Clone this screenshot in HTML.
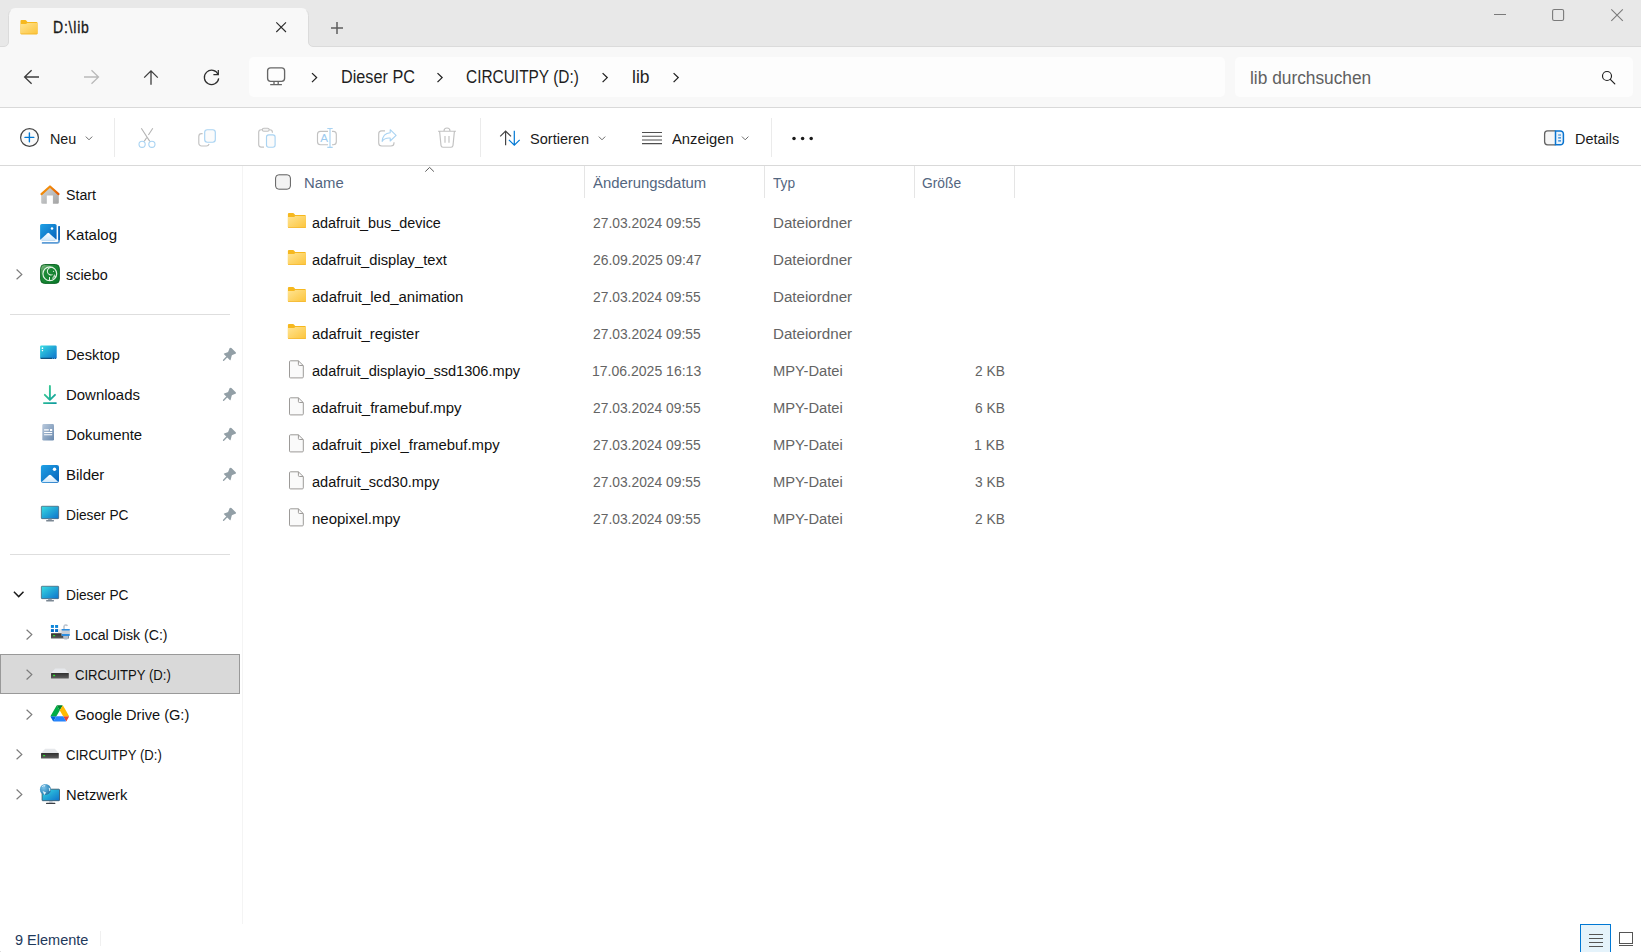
<!DOCTYPE html>
<html lang="de">
<head>
<meta charset="utf-8">
<title>D:\lib</title>
<style>
*{box-sizing:border-box;margin:0;padding:0}
html,body{width:1641px;height:952px;overflow:hidden;background:#fff}
body{position:relative;font-family:"Liberation Sans",sans-serif;font-size:14.5px;color:#1a1a1a;-webkit-font-smoothing:antialiased}
.abs,.t,svg.i{position:absolute}
.t{white-space:nowrap;line-height:20px;height:20px;transform-origin:0 0}
svg.i{overflow:visible}
#titlebar{position:absolute;left:0;top:0;width:1641px;height:46px;background:#e8e8e8}
#navbar{position:absolute;left:0;top:47px;width:1641px;height:60px;background:#f8f8f8}
#addr{position:absolute;left:249px;top:57px;width:976px;height:40px;background:#fdfdfd;border-radius:5px}
#search{position:absolute;left:1235px;top:57px;width:398px;height:40px;background:#fdfdfd;border-radius:5px}
.hline{position:absolute;left:0;width:1641px;height:1px;background:#d9d9d9}
#toolbar{position:absolute;left:0;top:108px;width:1641px;height:57px;background:#fff}
.vsep{position:absolute;width:1px;background:#ebebeb}
#sidebar{position:absolute;left:0;top:166px;width:242px;height:758px;background:#fff}
#divider{position:absolute;left:242px;top:166px;width:1px;height:758px;background:#f4f4f4}
.sline{position:absolute;left:10px;width:220px;height:1px;background:#dedede}
#sel{position:absolute;left:0;top:654px;width:240px;height:40px;background:#d9d9d9;border:1px solid #999}
#status{position:absolute;left:0;top:924px;width:1641px;height:28px;background:#fff}
.colsep{position:absolute;top:166px;width:1px;height:32px;background:#e5e5e5}
</style>
</head>
<body>
<div id="titlebar"></div>
<div id="navbar"></div>
<svg class="i" style="left:0;top:0" width="1641" height="48" viewBox="0 0 1641 48" fill="none">
<path d="M-1 46.5H4A4.5 4.5 0 0 0 8.5 42V15A7 7 0 0 1 15.5 8H301.5A7 7 0 0 1 308.5 15V42A4.5 4.5 0 0 0 313 46.5H1641V48H-1Z" fill="#f8f8f8"/>
<path d="M-1 46.5H4A4.5 4.5 0 0 0 8.5 42V15.5A7 7 0 0 1 10.5 10.5" stroke="#dbdbdb"/>
<path d="M306.5 10.5A7 7 0 0 1 308.5 15.5V42A4.5 4.5 0 0 0 313 46.5H1641" stroke="#dbdbdb"/>
</svg>
<div id="addr"></div>
<div id="search"></div>
<div class="hline" style="top:107px"></div>
<div id="toolbar"></div>
<div class="hline" style="top:165px"></div>
<div class="vsep" style="left:114px;top:118px;height:39px"></div>
<div class="vsep" style="left:480px;top:118px;height:39px"></div>
<div class="vsep" style="left:771px;top:118px;height:39px"></div>
<div id="sidebar"></div>
<div id="divider"></div>
<div class="sline" style="top:314px"></div>
<div class="sline" style="top:554px"></div>
<div id="sel"></div>
<div id="status"></div>
<div class="vsep" style="left:100px;top:931px;height:15px;background:#f0f0f0"></div>
<div class="colsep" style="left:584px"></div>
<div class="colsep" style="left:764px"></div>
<div class="colsep" style="left:914px"></div>
<div class="colsep" style="left:1014px"></div>
<header aria-label="Tabs">
<span class="t" id="tabt" style="left:52.96px;top:17.93px;font-size:15.8px;color:#1a1a1a;transform:scaleX(0.8864);-webkit-text-stroke:.3px #1a1a1a;letter-spacing:.9px">D:\lib</span>
</header>
<nav aria-label="Adressleiste">
<span class="t" id="bc1" style="left:340.94px;top:67.26px;font-size:18px;color:#1f1f1f;transform:scaleX(0.9016)">Dieser PC</span>
<span class="t" id="bc2" style="left:466.24px;top:67.26px;font-size:18px;color:#1f1f1f;transform:scaleX(0.8569)">CIRCUITPY (D:)</span>
<span class="t" id="bc3" style="left:631.76px;top:67.26px;font-size:18px;color:#1f1f1f;transform:scaleX(0.9713)">lib</span>
<span class="t" id="srch" style="left:1250.02px;top:67.76px;font-size:18px;color:#606060;transform:scaleX(0.9617)">lib durchsuchen</span>
<!-- top bar icons -->
<svg class="i" style="left:0;top:0" width="1641" height="110" viewBox="0 0 1641 110" fill="none">
<defs>
<linearGradient id="fg" x1="0" y1="0" x2="1" y2="1"><stop offset="0" stop-color="#ffe493"/><stop offset="1" stop-color="#fcc43a"/></linearGradient>
<symbol id="folder" viewBox="0 0 18 15" overflow="visible">
<path d="M0 1.1A1.1 1.1 0 0 1 1.1 0H5.2a1.2 1.2 0 0 1 .9.4L7.3 2H16.9A1.1 1.1 0 0 1 18 3.1V13.9A1.1 1.1 0 0 1 16.9 15H1.1A1.1 1.1 0 0 1 0 13.9Z" fill="#f6b81f"/>
<path d="M0 4.1H5.6a1.6 1.6 0 0 0 1-.4L7.3 3.1H18V13.9A1.1 1.1 0 0 1 16.9 15H1.1A1.1 1.1 0 0 1 0 13.9Z" fill="url(#fg)"/>
<path d="M0.3 14.5H17.7" stroke="#f2b42c" stroke-width=".8" opacity=".8"/>
</symbol>
</defs>
<!-- tab folder -->
<use href="#folder" x="20" y="20" width="18" height="14.2"/>
<!-- tab close -->
<path d="M276.3 22.3L286 32M286 22.3L276.3 32" stroke="#2b2b2b" stroke-width="1.1"/>
<!-- new tab plus -->
<path d="M331 28H343M337 22V34" stroke="#5e5e5e" stroke-width="1.5"/>
<!-- window controls -->
<path d="M1494 14.5H1506" stroke="#7a7a7a" stroke-width="1"/>
<rect x="1552.6" y="9.5" width="11" height="11" rx="1.6" stroke="#7a7a7a" stroke-width="1.1"/>
<path d="M1611.3 9.3L1622.8 20.8M1622.8 9.3L1611.3 20.8" stroke="#7a7a7a" stroke-width="1.1"/>
<!-- back -->
<path d="M39 77H24.6M31.6 70.2L24.6 77L31.6 83.8" stroke="#3d3d3d" stroke-width="1.3" stroke-linejoin="miter"/>
<!-- forward (disabled) -->
<path d="M84 77H98.5M91.5 70.2L98.5 77L91.5 83.8" stroke="#b9b9b9" stroke-width="1.3"/>
<!-- up -->
<path d="M151 84.8V70.9M144.2 77.6L151 70.8L157.8 77.6" stroke="#3d3d3d" stroke-width="1.3"/>
<!-- refresh -->
<path d="M218.2 74.6A7.2 7.2 0 1 0 218.7 78.4" stroke="#2e2e2e" stroke-width="1.25"/>
<path d="M218.3 69.9V74.7H213.4" stroke="#2e2e2e" stroke-width="1.25"/>
<!-- pc outline icon -->
<rect x="267.6" y="67.8" width="17" height="13.5" rx="3" stroke="#666" stroke-width="1.35"/>
<path d="M274 81.5V84.4M278.2 81.5V84.4M270.2 84.6H281.9" stroke="#666" stroke-width="1.3"/>
<!-- breadcrumb chevrons -->
<g stroke="#222" stroke-width="1.3">
<path d="M312 73.1L316.6 77.6L312 82.1"/>
<path d="M437.5 73.1L442.1 77.6L437.5 82.1"/>
<path d="M602.6 73.1L607.2 77.6L602.6 82.1"/>
<path d="M673.6 73.1L678.2 77.6L673.6 82.1"/>
</g>
<!-- search -->
<circle cx="1607" cy="76" r="4.5" stroke="#1f1f1f" stroke-width="1.15"/>
<path d="M1610.3 79.3L1614.8 83.8" stroke="#1f1f1f" stroke-width="1.2" stroke-linecap="round"/>
</svg>
</nav>
<section aria-label="Befehlsleiste">
<span class="t" id="neu" style="left:50.24px;top:128.70px;font-size:15.3px;color:#1a1a1a;transform:scaleX(0.9374)">Neu</span>
<span class="t" id="sort" style="left:530.24px;top:128.70px;font-size:15.3px;color:#1a1a1a;transform:scaleX(0.9507)">Sortieren</span>
<span class="t" id="anz" style="left:671.98px;top:128.70px;font-size:15.3px;color:#1a1a1a;transform:scaleX(0.9656)">Anzeigen</span>
<span class="t" id="det" style="left:1575.02px;top:128.70px;font-size:15.3px;color:#1a1a1a;transform:scaleX(0.9450)">Details</span>
<!-- toolbar icons -->
<svg class="i" style="left:0;top:108px" width="1641" height="57" viewBox="0 108 1641 57" fill="none">
<!-- new -->
<circle cx="29.5" cy="137.5" r="8.9" fill="#fafafa" stroke="#444" stroke-width="1.2"/>
<path d="M25 137.4H33.8M29.4 133V141.8" stroke="#0078d4" stroke-width="1.4" stroke-linecap="round"/>
<path d="M85.8 136.6L89 139.8L92.2 136.6" stroke="#6b6b6b" stroke-width="1"/>
<!-- cut -->
<g stroke-width="1.1">
<path d="M141.3 128.3L149.8 141.4M152.8 128.3L148.4 135M146.6 137.8L144.2 141.4" stroke="#b4b4b4"/>
<circle cx="142.1" cy="144.3" r="3.1" stroke="#a9d3f2"/>
<circle cx="151.9" cy="144.3" r="3.1" stroke="#a9d3f2"/>
</g>
<!-- copy -->
<path d="M202.6 133.6H201.6A2.8 2.8 0 0 0 198.8 136.4V143.2A2.8 2.8 0 0 0 201.6 146H206.4A2.8 2.8 0 0 0 209.1 144" stroke="#c2c2c2" stroke-width="1.15"/>
<rect x="204.7" y="129.7" width="10.6" height="12.5" rx="2.6" fill="#fbfbfb" stroke="#a9d3f2" stroke-width="1.15"/>
<!-- paste -->
<path d="M272.4 132.8V132.2A2.5 2.5 0 0 0 269.9 129.7H261.2A2.5 2.5 0 0 0 258.7 132.2V144.6A2.5 2.5 0 0 0 261.2 147.1H264" stroke="#c2c2c2" stroke-width="1.15"/>
<rect x="262.3" y="128.2" width="6.9" height="3.1" rx="1.55" fill="#f4f4f4" stroke="#c2c2c2" stroke-width="1.1"/>
<rect x="266.5" y="134.8" width="8.6" height="12.4" rx="2.2" fill="#fbfbfb" stroke="#a9d3f2" stroke-width="1.15"/>
<!-- rename -->
<path d="M328 131.3H320.5A3 3 0 0 0 317.5 134.3V141.7A3 3 0 0 0 320.5 144.7H328M332 131.3H333.3A3 3 0 0 1 336.3 134.3V141.7A3 3 0 0 1 333.3 144.7H332" stroke="#c2c2c2" stroke-width="1.15"/>
<path d="M330 128.5V147.4M327.3 128.5H332.7M327.3 147.4H332.7" stroke="#a9d3f2" stroke-width="1.15"/>
<text x="320.15" y="141.6" font-family="Liberation Sans, sans-serif" font-size="11.7" fill="#9ccbf0">A</text>
<!-- share -->
<path d="M385 130.9H381.7A3 3 0 0 0 378.7 133.9V143A3 3 0 0 0 381.7 146H391A3 3 0 0 0 394 143V142.2" stroke="#c2c2c2" stroke-width="1.15"/>
<path d="M390.2 129.7L396.1 135.3L390.2 141V138.1C386.4 137.8 383.7 139 382.1 141.4C382.5 136.6 385.3 133.1 390.2 132.7Z" stroke="#a9d3f2" stroke-width="1.1" stroke-linejoin="round"/>
<!-- delete -->
<path d="M438 131.2H456M439.6 131.4L441 145.4A2 2 0 0 0 443 147.2H451A2 2 0 0 0 453 145.4L454.4 131.4M444 131A3 3 0 0 1 450 131M445 136V142.8M449 136V142.8" stroke="#c2c2c2" stroke-width="1.15"/>
<!-- sort -->
<path d="M505.6 145.2V131M500.2 136.4L505.6 131L511 136.4" stroke="#444" stroke-width="1.2"/>
<path d="M514.3 130.8V145.2M508.9 139.8L514.3 145.2L519.7 139.8" stroke="#0078d4" stroke-width="1.2"/>
<path d="M598.8 136.6L602 139.8L605.2 136.6" stroke="#6b6b6b" stroke-width="1"/>
<!-- view -->
<path d="M642 132.5H662M642 136.2H662M642 139.9H662M642 143.6H662" stroke="#4f4f4f" stroke-width="1.05"/>
<path d="M742 136.6L745.2 139.8L748.4 136.6" stroke="#6b6b6b" stroke-width="1"/>
<!-- more -->
<circle cx="794" cy="138.4" r="1.75" fill="#1a1a1a"/><circle cx="802.6" cy="138.4" r="1.75" fill="#1a1a1a"/><circle cx="811.2" cy="138.4" r="1.75" fill="#1a1a1a"/>
<!-- details pane -->
<path d="M1555.5 130.9H1547.6A3 3 0 0 0 1544.6 133.9V141.8A3 3 0 0 0 1547.6 144.8H1555.5" fill="#f6f6f6" stroke="#616161" stroke-width="1.3"/>
<path d="M1555.5 130.9H1560.4A3 3 0 0 1 1563.4 133.9V141.8A3 3 0 0 1 1560.4 144.8H1555.5Z" fill="#eaf3fb" stroke="#0a74cf" stroke-width="1.5"/>
<path d="M1558.2 135H1561M1558.2 137.9H1561M1558.2 140.8H1561" stroke="#1a7fd6" stroke-width="1.2"/>
</svg>
</section>
<aside aria-label="Navigationsbereich">
<span class="t" id="s1" style="left:65.50px;top:184.70px;font-size:15.3px;color:#111;transform:scaleX(0.9279)">Start</span>
<span class="t" id="s2" style="left:65.50px;top:224.70px;font-size:15.3px;color:#111;transform:scaleX(0.9846)">Katalog</span>
<span class="t" id="s3" style="left:65.50px;top:264.70px;font-size:15.3px;color:#111;transform:scaleX(0.9423)">sciebo</span>
<span class="t" id="s4" style="left:65.50px;top:344.70px;font-size:15.3px;color:#111;transform:scaleX(0.9601)">Desktop</span>
<span class="t" id="s5" style="left:65.50px;top:384.70px;font-size:15.3px;color:#111;transform:scaleX(0.9768)">Downloads</span>
<span class="t" id="s6" style="left:65.50px;top:424.70px;font-size:15.3px;color:#111;transform:scaleX(0.9733)">Dokumente</span>
<span class="t" id="s7" style="left:65.50px;top:464.70px;font-size:15.3px;color:#111;transform:scaleX(0.9800)">Bilder</span>
<span class="t" id="s8" style="left:65.50px;top:504.70px;font-size:15.3px;color:#111;transform:scaleX(0.8962)">Dieser PC</span>
<span class="t" id="s9" style="left:65.50px;top:584.70px;font-size:15.3px;color:#111;transform:scaleX(0.8962)">Dieser PC</span>
<span class="t" id="s10" style="left:75.24px;top:624.70px;font-size:15.3px;color:#111;transform:scaleX(0.9228)">Local Disk (C:)</span>
<span class="t" id="s11" style="left:75.24px;top:664.70px;font-size:15.3px;color:#111;transform:scaleX(0.8563)">CIRCUITPY (D:)</span>
<span class="t" id="s12" style="left:75.24px;top:704.70px;font-size:15.3px;color:#111;transform:scaleX(0.9531)">Google Drive (G:)</span>
<span class="t" id="s13" style="left:65.50px;top:744.70px;font-size:15.3px;color:#111;transform:scaleX(0.8563)">CIRCUITPY (D:)</span>
<span class="t" id="s14" style="left:65.50px;top:784.70px;font-size:15.3px;color:#111;transform:scaleX(0.9624)">Netzwerk</span>
<!-- sidebar icons -->
<svg class="i" style="left:0;top:166px" width="242" height="758" viewBox="0 166 242 758" fill="none">
<defs>
<linearGradient id="gHome" x1="0" y1="0" x2="1" y2="1"><stop offset="0" stop-color="#d6dadc"/><stop offset="1" stop-color="#a3a3a3"/></linearGradient>
<linearGradient id="gRoof" x1="0" y1="0" x2="1" y2="0"><stop offset="0" stop-color="#f08a0a"/><stop offset=".5" stop-color="#f28c0c"/><stop offset="1" stop-color="#e25a00"/></linearGradient>
<linearGradient id="gPic" x1="0" y1="0" x2="1" y2="1"><stop offset="0" stop-color="#20a2e6"/><stop offset="1" stop-color="#0560b9"/></linearGradient>
<linearGradient id="gMnt" x1="0" y1="0" x2="0" y2="1"><stop offset="0" stop-color="#ffffff"/><stop offset="1" stop-color="#cfe8fb"/></linearGradient>
<linearGradient id="gScr" x1="0" y1="0" x2="1" y2="1"><stop offset="0" stop-color="#3adde3"/><stop offset=".5" stop-color="#22a6d6"/><stop offset="1" stop-color="#0f72cc"/></linearGradient>
<linearGradient id="gDoc" x1="0" y1="0" x2="1" y2="1"><stop offset="0" stop-color="#b9c9dc"/><stop offset="1" stop-color="#6888ad"/></linearGradient>
<linearGradient id="gDl" x1="0" y1="0" x2="1" y2="1"><stop offset="0" stop-color="#41d590"/><stop offset="1" stop-color="#0d9a9f"/></linearGradient>
<linearGradient id="gDrv" x1="0" y1="0" x2="0" y2="1"><stop offset="0" stop-color="#2f2f2f"/><stop offset="1" stop-color="#5e5e5e"/></linearGradient>
<linearGradient id="gSci" x1="0" y1="0" x2="1" y2="1"><stop offset="0" stop-color="#9cc797"/><stop offset=".32" stop-color="#1d8a37"/><stop offset="1" stop-color="#0a7a2a"/></linearGradient>
<radialGradient id="gGlobe" cx=".35" cy=".35" r=".75"><stop offset="0" stop-color="#7cc4ea"/><stop offset=".6" stop-color="#3f93c4"/><stop offset="1" stop-color="#246f9c"/></radialGradient>
<symbol id="pin" viewBox="0 0 14 14" overflow="visible">
<path d="M7.3 .5a1 1 0 0 1 1.4 0L13 4.6a1 1 0 0 1-.3 1.6L9.6 7.4a1 1 0 0 0-.6.7L7.9 12.3a.5.5 0 0 1-.85.2L1.3 6.6a.5.5 0 0 1 .2-.8L4.9 4.7a1 1 0 0 0 .6-.6L6.6 1.4a1 1 0 0 1 .7-.9Z" fill="#929fa6"/>
<path d="M4 9.5L.9 12.6" stroke="#929fa6" stroke-width="1.4" stroke-linecap="round"/>
</symbol>
<symbol id="drive" viewBox="0 0 18 10" overflow="visible">
<path d="M4.2 0H13.8L17.8 4.4H0.2Z" fill="#e6e8eb"/>
<rect x="0" y="4.3" width="17.8" height="5.6" rx=".5" fill="url(#gDrv)"/>
<rect x="2" y="6.2" width="2.2" height="1.4" rx=".6" fill="#2fe52f"/>
</symbol>
<symbol id="monitor" viewBox="0 0 18 16" overflow="visible">
<rect x=".35" y=".35" width="17.3" height="12.4" rx=".6" fill="url(#gScr)" stroke="#40586b" stroke-width=".7"/>
<rect x="7.1" y="12.9" width="3.7" height="1.3" fill="#93a0ab"/>
<rect x="5.1" y="14.1" width="7.9" height="1.4" rx=".4" fill="#7b8793"/>
</symbol>
</defs>
<!-- Start / home -->
<path d="M41.2 193.6L50 186.2L58.8 193.6V202.4A1.3 1.3 0 0 1 57.5 203.7H52.9V195.5H46.8V203.7H42.5A1.3 1.3 0 0 1 41.2 202.4Z" fill="url(#gHome)"/>
<path d="M41.5 194.1L50 186.5L58.5 194.1" stroke="url(#gRoof)" stroke-width="2.2" stroke-linecap="round" stroke-linejoin="round"/>
<!-- Katalog / gallery -->
<path d="M42.6 242.9H57A2.2 2.2 0 0 0 59.1 240.7V226.8" stroke="#5c9cd6" stroke-width="1.7" stroke-linecap="round"/>
<path d="M59.1 226.8V239.5" stroke="#0a66bb" stroke-width="1.7" stroke-linecap="round"/>
<rect x="40.1" y="223.9" width="16.5" height="16.3" rx="1.7" fill="url(#gPic)"/>
<path d="M40.6 239.6L47.5 233.2a1.2 1.2 0 0 1 1.6 0L56.2 239.6A1.2 1.2 0 0 1 55.4 240.2H41.4A1.2 1.2 0 0 1 40.6 239.6Z" fill="url(#gMnt)"/>
<circle cx="52" cy="228.4" r="1.25" fill="#fff"/>
<!-- sciebo -->
<rect x="40.6" y="264.5" width="18.8" height="18.9" rx="4" fill="url(#gSci)" stroke="#07601f" stroke-width=".9"/>
<circle cx="49.8" cy="273.7" r="6.9" stroke="#e6f2e6" stroke-width="1.15"/>
<path d="M51.6 267.6A3.7 3.7 0 1 0 52.6 274.6" stroke="#e6f2e6" stroke-width="1.05"/>
<path d="M49.5 277V280.4M52.6 277.6L53.4 279.6M54.6 274.6L53.6 277.4L56 276" stroke="#e6f2e6" stroke-width="1"/>
<circle cx="53.5" cy="271.3" r=".6" fill="#d6ead6"/>
<path d="M16.6 269.5L21.8 274.4L16.6 279.3" stroke="#7c7c7c" stroke-width="1.2"/>
<!-- Desktop -->
<rect x="40.1" y="345.6" width="16.6" height="13.2" rx="1.2" fill="url(#gScr)"/>
<path d="M40.6 358.3H52.2" stroke="#053a63" stroke-width="1"/>
<rect x="53" y="357.9" width="1" height=".9" fill="#0a4f8a"/><rect x="55" y="357.9" width="1" height=".9" fill="#0a4f8a"/>
<rect x="41.7" y="347.2" width="1.5" height="1.7" rx=".5" fill="#fff"/><rect x="41.7" y="350" width="1.5" height="1.2" rx=".4" fill="#fff"/>
<!-- Downloads -->
<path d="M49.9 386V399.6M44.8 394.8L49.9 399.9L55 394.8M43.9 403.1H55.9" stroke="url(#gDl)" stroke-width="1.9" stroke-linecap="round" stroke-linejoin="round"/>
<!-- Dokumente -->
<rect x="42.3" y="424.1" width="11.7" height="16.5" rx="1.3" fill="url(#gDoc)"/>
<path d="M44.1 429.8H48.8M44.1 432.5H52.2M44.1 434.7H52.2" stroke="#fff" stroke-width="1.15"/>
<rect x="50" y="429" width="2.2" height="2" rx=".3" fill="#fff"/>
<!-- Bilder -->
<rect x="40.9" y="465" width="18.1" height="17.9" rx="2.1" fill="url(#gPic)"/>
<path d="M41.9 481.7L48.9 475.3a1.6 1.6 0 0 1 2.2 0L58 481.7A1.5 1.5 0 0 1 57 482.2H42.9A1.5 1.5 0 0 1 41.9 481.7Z" fill="url(#gMnt)"/>
<circle cx="54.5" cy="469.3" r="1.7" fill="#fff"/>
<!-- Dieser PC (pinned) -->
<use href="#monitor" x="41" y="505.9" width="18" height="16"/>
<!-- pins -->
<use href="#pin" x="222.7" y="347.6" width="14" height="14"/>
<use href="#pin" x="222.7" y="387.6" width="14" height="14"/>
<use href="#pin" x="222.7" y="427.6" width="14" height="14"/>
<use href="#pin" x="222.7" y="467.6" width="14" height="14"/>
<use href="#pin" x="222.7" y="507.6" width="14" height="14"/>
<!-- Dieser PC (tree) -->
<path d="M13.9 591.8L18.7 596.6L23.5 591.8" stroke="#1a1a1a" stroke-width="1.45"/>
<use href="#monitor" x="41" y="585.9" width="18" height="16"/>
<!-- Local Disk -->
<path d="M26.6 629.7L31.8 634.6L26.6 639.5" stroke="#7c7c7c" stroke-width="1.2"/>
<rect x="50.9" y="625" width="3" height="2.9" fill="#0c86da"/><rect x="55.1" y="625" width="3" height="2.9" fill="#0c86da"/>
<rect x="50.9" y="629.1" width="3" height="2.9" fill="#006ac6"/><rect x="55.1" y="629.1" width="3" height="2.9" fill="#006ac6"/>
<rect x="58.1" y="629.3" width="4" height="4" fill="#e4e4e4"/>
<rect x="51" y="633.2" width="17.8" height="5.4" rx=".4" fill="url(#gDrv)"/>
<rect x="53" y="634.9" width="2.2" height="1.4" rx=".6" fill="#2fe52f"/>
<path d="M64 629V626.4A1.9 1.9 0 0 1 67.4 625.9" stroke="#bcc5d0" stroke-width="1.6"/>
<path d="M63.2 635.5H68.4V637A2.3 2.3 0 0 1 63.2 637Z" fill="#b4bcc8"/>
<rect x="61.5" y="628.9" width="8.4" height="7" rx=".9" fill="#c9ced6"/>
<rect x="61.5" y="628.9" width="8.4" height="1.7" rx=".8" fill="#2b8de0"/>
<rect x="61.5" y="634.1" width="8.4" height="1.8" rx=".8" fill="#2b8de0"/>
<!-- CIRCUITPY selected -->
<path d="M26.6 669.7L31.8 674.6L26.6 679.5" stroke="#7c7c7c" stroke-width="1.2"/>
<use href="#drive" x="51" y="668.6" width="18" height="10"/>
<!-- Google Drive -->
<path d="M26.6 709.7L31.8 714.6L26.6 719.5" stroke="#7c7c7c" stroke-width="1.2"/>
<g transform="translate(50.6 705.2) scale(.2105)">
<path d="m6.6 66.85 3.85 6.65c.8 1.4 1.95 2.5 3.3 3.3l13.75-23.8h-27.5c0 1.55.4 3.1 1.2 4.5z" fill="#0066da"/>
<path d="m43.65 25-13.75-23.8c-1.35.8-2.5 1.9-3.3 3.3l-25.4 44a9.06 9.06 0 0 0 -1.2 4.5h27.5z" fill="#00ac47"/>
<path d="m73.55 76.8c1.35-.8 2.5-1.9 3.3-3.3l1.6-2.75 7.65-13.25c.8-1.4 1.2-2.95 1.2-4.5h-27.502l5.852 11.5z" fill="#ea4335"/>
<path d="m43.65 25 13.75-23.8c-1.35-.8-2.9-1.2-4.5-1.2h-18.5c-1.6 0-3.15.45-4.5 1.2z" fill="#00832d"/>
<path d="m59.8 53h-32.3l-13.75 23.8c1.35.8 2.9 1.2 4.5 1.2h50.8c1.6 0 3.15-.45 4.5-1.2z" fill="#2684fc"/>
<path d="m73.4 26.5-12.7-22c-.8-1.4-1.95-2.5-3.3-3.3l-13.75 23.8 16.15 28h27.45c0-1.55-.4-3.1-1.2-4.5z" fill="#ffba00"/>
</g>
<!-- CIRCUITPY second -->
<path d="M16.6 749.5L21.8 754.4L16.6 759.3" stroke="#7c7c7c" stroke-width="1.2"/>
<use href="#drive" x="41" y="748.7" width="18" height="10"/>
<!-- Netzwerk -->
<path d="M16.6 789.5L21.8 794.4L16.6 799.3" stroke="#7c7c7c" stroke-width="1.2"/>
<rect x="42.1" y="789.2" width="17.4" height="11.5" rx=".6" fill="url(#gScr)" stroke="#2f4f63" stroke-width=".8"/>
<rect x="49" y="801.1" width="3.6" height="1.5" fill="#b9c2cc"/>
<path d="M46.6 803.4H54.8" stroke="#3a3f45" stroke-width="1.2" stroke-linecap="round"/>
<circle cx="45.4" cy="789.4" r="5.5" fill="url(#gGlobe)"/>
<path d="M42.3 786.6l1-.9 1.2.4M44 786l1.200000-.8" stroke="#d8eef8" stroke-width=".9" stroke-linecap="round"/>
<path d="M42.6 791l3.600000 1.600000-1.900000 2.300000z" fill="#dff1f8"/>
<path d="M48.6 787.6l1.500000 .6.300000 2.200000-1.100000 .8z" fill="#cfe9f4"/>
</svg>
</aside>
<main aria-label="Dateiliste">
<span class="t" id="h1" style="left:303.98px;top:172.70px;font-size:15.3px;color:#53667f;transform:scaleX(0.9729)">Name</span>
<span class="t" id="h2" style="left:592.50px;top:172.70px;font-size:15.3px;color:#53667f;transform:scaleX(0.9712)">Änderungsdatum</span>
<span class="t" id="h3" style="left:773.02px;top:172.70px;font-size:15.3px;color:#53667f;transform:scaleX(0.8952)">Typ</span>
<span class="t" id="h4" style="left:921.74px;top:172.70px;font-size:15.3px;color:#53667f;transform:scaleX(0.9039)">Größe</span>
<span class="t" id="n0" style="left:312.24px;top:212.70px;font-size:15.3px;color:#111;transform:scaleX(0.9413)">adafruit_bus_device</span>
<span class="t" id="d0" style="left:592.50px;top:212.70px;font-size:15.3px;color:#646464;transform:scaleX(0.9038)">27.03.2024 09:55</span>
<span class="t" id="t0" style="left:773.02px;top:212.70px;font-size:15.3px;color:#646464;transform:scaleX(0.9900)">Dateiordner</span>
<span class="t" id="n1" style="left:312.24px;top:249.70px;font-size:15.3px;color:#111;transform:scaleX(0.9610)">adafruit_display_text</span>
<span class="t" id="d1" style="left:592.50px;top:249.70px;font-size:15.3px;color:#646464;transform:scaleX(0.9105)">26.09.2025 09:47</span>
<span class="t" id="t1" style="left:773.02px;top:249.70px;font-size:15.3px;color:#646464;transform:scaleX(0.9900)">Dateiordner</span>
<span class="t" id="n2" style="left:312.24px;top:286.70px;font-size:15.3px;color:#111;transform:scaleX(0.9784)">adafruit_led_animation</span>
<span class="t" id="d2" style="left:592.50px;top:286.70px;font-size:15.3px;color:#646464;transform:scaleX(0.9038)">27.03.2024 09:55</span>
<span class="t" id="t2" style="left:773.02px;top:286.70px;font-size:15.3px;color:#646464;transform:scaleX(0.9900)">Dateiordner</span>
<span class="t" id="n3" style="left:312.24px;top:323.70px;font-size:15.3px;color:#111;transform:scaleX(0.9710)">adafruit_register</span>
<span class="t" id="d3" style="left:592.50px;top:323.70px;font-size:15.3px;color:#646464;transform:scaleX(0.9038)">27.03.2024 09:55</span>
<span class="t" id="t3" style="left:773.02px;top:323.70px;font-size:15.3px;color:#646464;transform:scaleX(0.9900)">Dateiordner</span>
<span class="t" id="n4" style="left:312.24px;top:360.70px;font-size:15.3px;color:#111;transform:scaleX(0.9518)">adafruit_displayio_ssd1306.mpy</span>
<span class="t" id="d4" style="left:591.70px;top:360.70px;font-size:15.3px;color:#646464;transform:scaleX(0.9171)">17.06.2025 16:13</span>
<span class="t" id="t4" style="left:773.02px;top:360.70px;font-size:15.3px;color:#646464;transform:scaleX(0.9626)">MPY-Datei</span>
<span class="t" id="z4" style="left:975.26px;top:360.70px;font-size:15.3px;color:#646464;transform:scaleX(0.8993)">2 KB</span>
<span class="t" id="n5" style="left:312.24px;top:397.70px;font-size:15.3px;color:#111;transform:scaleX(0.9774)">adafruit_framebuf.mpy</span>
<span class="t" id="d5" style="left:592.50px;top:397.70px;font-size:15.3px;color:#646464;transform:scaleX(0.9038)">27.03.2024 09:55</span>
<span class="t" id="t5" style="left:773.02px;top:397.70px;font-size:15.3px;color:#646464;transform:scaleX(0.9626)">MPY-Datei</span>
<span class="t" id="z5" style="left:975.26px;top:397.70px;font-size:15.3px;color:#646464;transform:scaleX(0.8993)">6 KB</span>
<span class="t" id="n6" style="left:312.24px;top:434.70px;font-size:15.3px;color:#111;transform:scaleX(0.9725)">adafruit_pixel_framebuf.mpy</span>
<span class="t" id="d6" style="left:592.50px;top:434.70px;font-size:15.3px;color:#646464;transform:scaleX(0.9038)">27.03.2024 09:55</span>
<span class="t" id="t6" style="left:773.02px;top:434.70px;font-size:15.3px;color:#646464;transform:scaleX(0.9626)">MPY-Datei</span>
<span class="t" id="z6" style="left:974.46px;top:434.70px;font-size:15.3px;color:#646464;transform:scaleX(0.9213)">1 KB</span>
<span class="t" id="n7" style="left:312.24px;top:471.70px;font-size:15.3px;color:#111;transform:scaleX(0.9543)">adafruit_scd30.mpy</span>
<span class="t" id="d7" style="left:592.50px;top:471.70px;font-size:15.3px;color:#646464;transform:scaleX(0.9038)">27.03.2024 09:55</span>
<span class="t" id="t7" style="left:773.02px;top:471.70px;font-size:15.3px;color:#646464;transform:scaleX(0.9626)">MPY-Datei</span>
<span class="t" id="z7" style="left:975.26px;top:471.70px;font-size:15.3px;color:#646464;transform:scaleX(0.8993)">3 KB</span>
<span class="t" id="n8" style="left:312.24px;top:508.70px;font-size:15.3px;color:#111;transform:scaleX(0.9805)">neopixel.mpy</span>
<span class="t" id="d8" style="left:592.50px;top:508.70px;font-size:15.3px;color:#646464;transform:scaleX(0.9038)">27.03.2024 09:55</span>
<span class="t" id="t8" style="left:773.02px;top:508.70px;font-size:15.3px;color:#646464;transform:scaleX(0.9626)">MPY-Datei</span>
<span class="t" id="z8" style="left:975.26px;top:508.70px;font-size:15.3px;color:#646464;transform:scaleX(0.8993)">2 KB</span>
<!-- list icons -->
<svg class="i" style="left:243px;top:166px" width="800" height="400" viewBox="243 166 800 400" fill="none">
<rect x="275.6" y="174.8" width="14.8" height="14.4" rx="3.2" fill="#f3f3f3" stroke="#5d5d5d" stroke-width="1"/>
<path d="M425.3 171.6L429.6 167.4L433.9 171.6" stroke="#5a5a5a" stroke-width="1"/>
<use href="#folder" x="287.9" y="213.0" width="18" height="15"/>
<use href="#folder" x="287.9" y="250.0" width="18" height="15"/>
<use href="#folder" x="287.9" y="287.0" width="18" height="15"/>
<use href="#folder" x="287.9" y="324.0" width="18" height="15"/>
<g transform="translate(0 360.3)"><path d="M289.5 1.5A1 1 0 0 1 290.5 .5H298.4L303.3 5.3V16.6A1 1 0 0 1 302.3 17.6H290.5A1 1 0 0 1 289.5 16.6Z" fill="#fafafa" stroke="#9c9a98" stroke-width="1"/><path d="M298.4 .6V4.2A1 1 0 0 0 299.4 5.2H303.2" stroke="#9c9a98" stroke-width="1"/></g>
<g transform="translate(0 397.3)"><path d="M289.5 1.5A1 1 0 0 1 290.5 .5H298.4L303.3 5.3V16.6A1 1 0 0 1 302.3 17.6H290.5A1 1 0 0 1 289.5 16.6Z" fill="#fafafa" stroke="#9c9a98" stroke-width="1"/><path d="M298.4 .6V4.2A1 1 0 0 0 299.4 5.2H303.2" stroke="#9c9a98" stroke-width="1"/></g>
<g transform="translate(0 434.3)"><path d="M289.5 1.5A1 1 0 0 1 290.5 .5H298.4L303.3 5.3V16.6A1 1 0 0 1 302.3 17.6H290.5A1 1 0 0 1 289.5 16.6Z" fill="#fafafa" stroke="#9c9a98" stroke-width="1"/><path d="M298.4 .6V4.2A1 1 0 0 0 299.4 5.2H303.2" stroke="#9c9a98" stroke-width="1"/></g>
<g transform="translate(0 471.3)"><path d="M289.5 1.5A1 1 0 0 1 290.5 .5H298.4L303.3 5.3V16.6A1 1 0 0 1 302.3 17.6H290.5A1 1 0 0 1 289.5 16.6Z" fill="#fafafa" stroke="#9c9a98" stroke-width="1"/><path d="M298.4 .6V4.2A1 1 0 0 0 299.4 5.2H303.2" stroke="#9c9a98" stroke-width="1"/></g>
<g transform="translate(0 508.3)"><path d="M289.5 1.5A1 1 0 0 1 290.5 .5H298.4L303.3 5.3V16.6A1 1 0 0 1 302.3 17.6H290.5A1 1 0 0 1 289.5 16.6Z" fill="#fafafa" stroke="#9c9a98" stroke-width="1"/><path d="M298.4 .6V4.2A1 1 0 0 0 299.4 5.2H303.2" stroke="#9c9a98" stroke-width="1"/></g>
</svg>
</main>
<footer aria-label="Statusleiste">
<span class="t" id="stat" style="left:14.76px;top:929.70px;font-size:15.3px;color:#1e395b;transform:scaleX(0.9480)">9 Elemente</span>
<!-- status bar view toggles -->
<div class="abs" style="left:1580px;top:924px;width:31px;height:28px;background:#e5f3fb;border:1px solid #0078d4;border-bottom:0"></div>
<svg class="i" style="left:1570px;top:924px" width="71" height="28" viewBox="1570 924 71 28" fill="none">
<path d="M1589 934.5H1603M1589 938.5H1603M1589 942.5H1603M1589 946.5H1603" stroke="#555" stroke-width="1"/>
<rect x="1619.5" y="932.5" width="13" height="11" stroke="#555" stroke-width="1"/>
<path d="M1619 945.5H1633" stroke="#555" stroke-width="1"/>
</svg>
<div class="abs" style="left:0;top:951px;width:1px;height:1px;background:#e0e0e0"></div>
</footer>
</body>
</html>
